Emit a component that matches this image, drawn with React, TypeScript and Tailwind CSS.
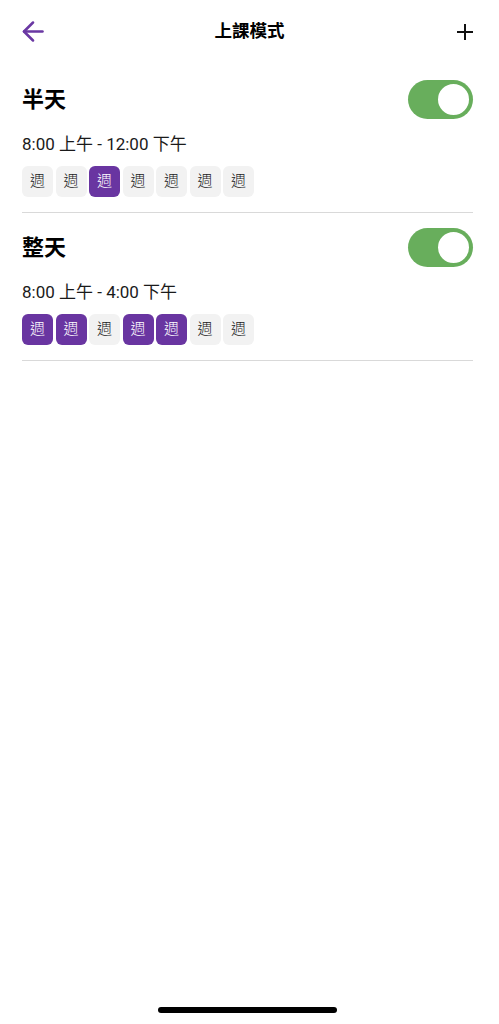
import React from "react";

const FONT = { fontFamily: 'Roboto, "Noto Sans CJK TC", "Noto Sans", sans-serif' };

function Toggle() {
  return (
    <div className="relative h-[39px] w-[65px] rounded-full bg-[#68ae5c]">
      <div className="absolute right-[2px] top-[2px] h-[35px] w-[35px] rounded-full border-2 border-[#68ae5c] bg-white" />
    </div>
  );
}

function Chips({ active }: { active: boolean[] }) {
  return (
    <div className="mt-[10px] flex gap-[2.5px]">
      {active.map((a, i) => (
        <div
          key={i}
          className={
            a
              ? "flex h-[31px] w-[31px] items-center justify-center rounded-[6px] bg-[#6935a1] text-[15px] font-light text-white"
              : "flex h-[31px] w-[31px] items-center justify-center rounded-[6px] bg-[#f2f2f2] text-[15px] font-light text-[#222222]"
          }
        >
          週
        </div>
      ))}
    </div>
  );
}

function Section({ title, time, active }: { title: string; time: string; active: boolean[] }) {
  return (
    <div className="border-b border-[#d9d9d9] pt-[15px] pb-[15px]">
      <div className="flex h-[39px] items-center justify-between">
        <div className="text-[22px] font-bold leading-none text-black">{title}</div>
        <Toggle />
      </div>
      <div className="mt-[13px] text-[17px] leading-[24px] text-[#1a1a1a]">{time}</div>
      <Chips active={active} />
    </div>
  );
}

export default function App() {
  return (
    <div className="relative h-[1024px] w-[499px] overflow-hidden bg-white" style={FONT}>
      <div className="relative flex h-[65px] items-center justify-between pl-[22px] pr-[25px] pb-[2px]">
        <svg width="22" height="21" viewBox="0 0 22 21" fill="none" stroke="#6a38a3" strokeWidth="2.5" strokeLinecap="round" strokeLinejoin="round">
          <path d="M20.5 10.5H2" />
          <path d="M11 1.5L2 10.5L11 19.5" />
        </svg>
        <div className="absolute left-0 right-0 top-0 flex h-[63px] items-center justify-center text-[17.5px] font-semibold text-black">
          上課模式
        </div>
        <svg width="18" height="18" viewBox="0 0 18 18" fill="none" stroke="#111" strokeWidth="2" strokeLinecap="butt">
          <path d="M9 1V17" />
          <path d="M1 9H17" />
        </svg>
      </div>
      <div className="pl-[22px] pr-[26px]">
        <Section title="半天" time="8:00 上午 - 12:00 下午" active={[false, false, true, false, false, false, false]} />
        <Section title="整天" time="8:00 上午 - 4:00 下午" active={[true, true, false, true, true, false, false]} />
      </div>
      <div className="absolute bottom-[11px] left-[158px] h-[6px] w-[179px] rounded-full bg-black" />
    </div>
  );
}
